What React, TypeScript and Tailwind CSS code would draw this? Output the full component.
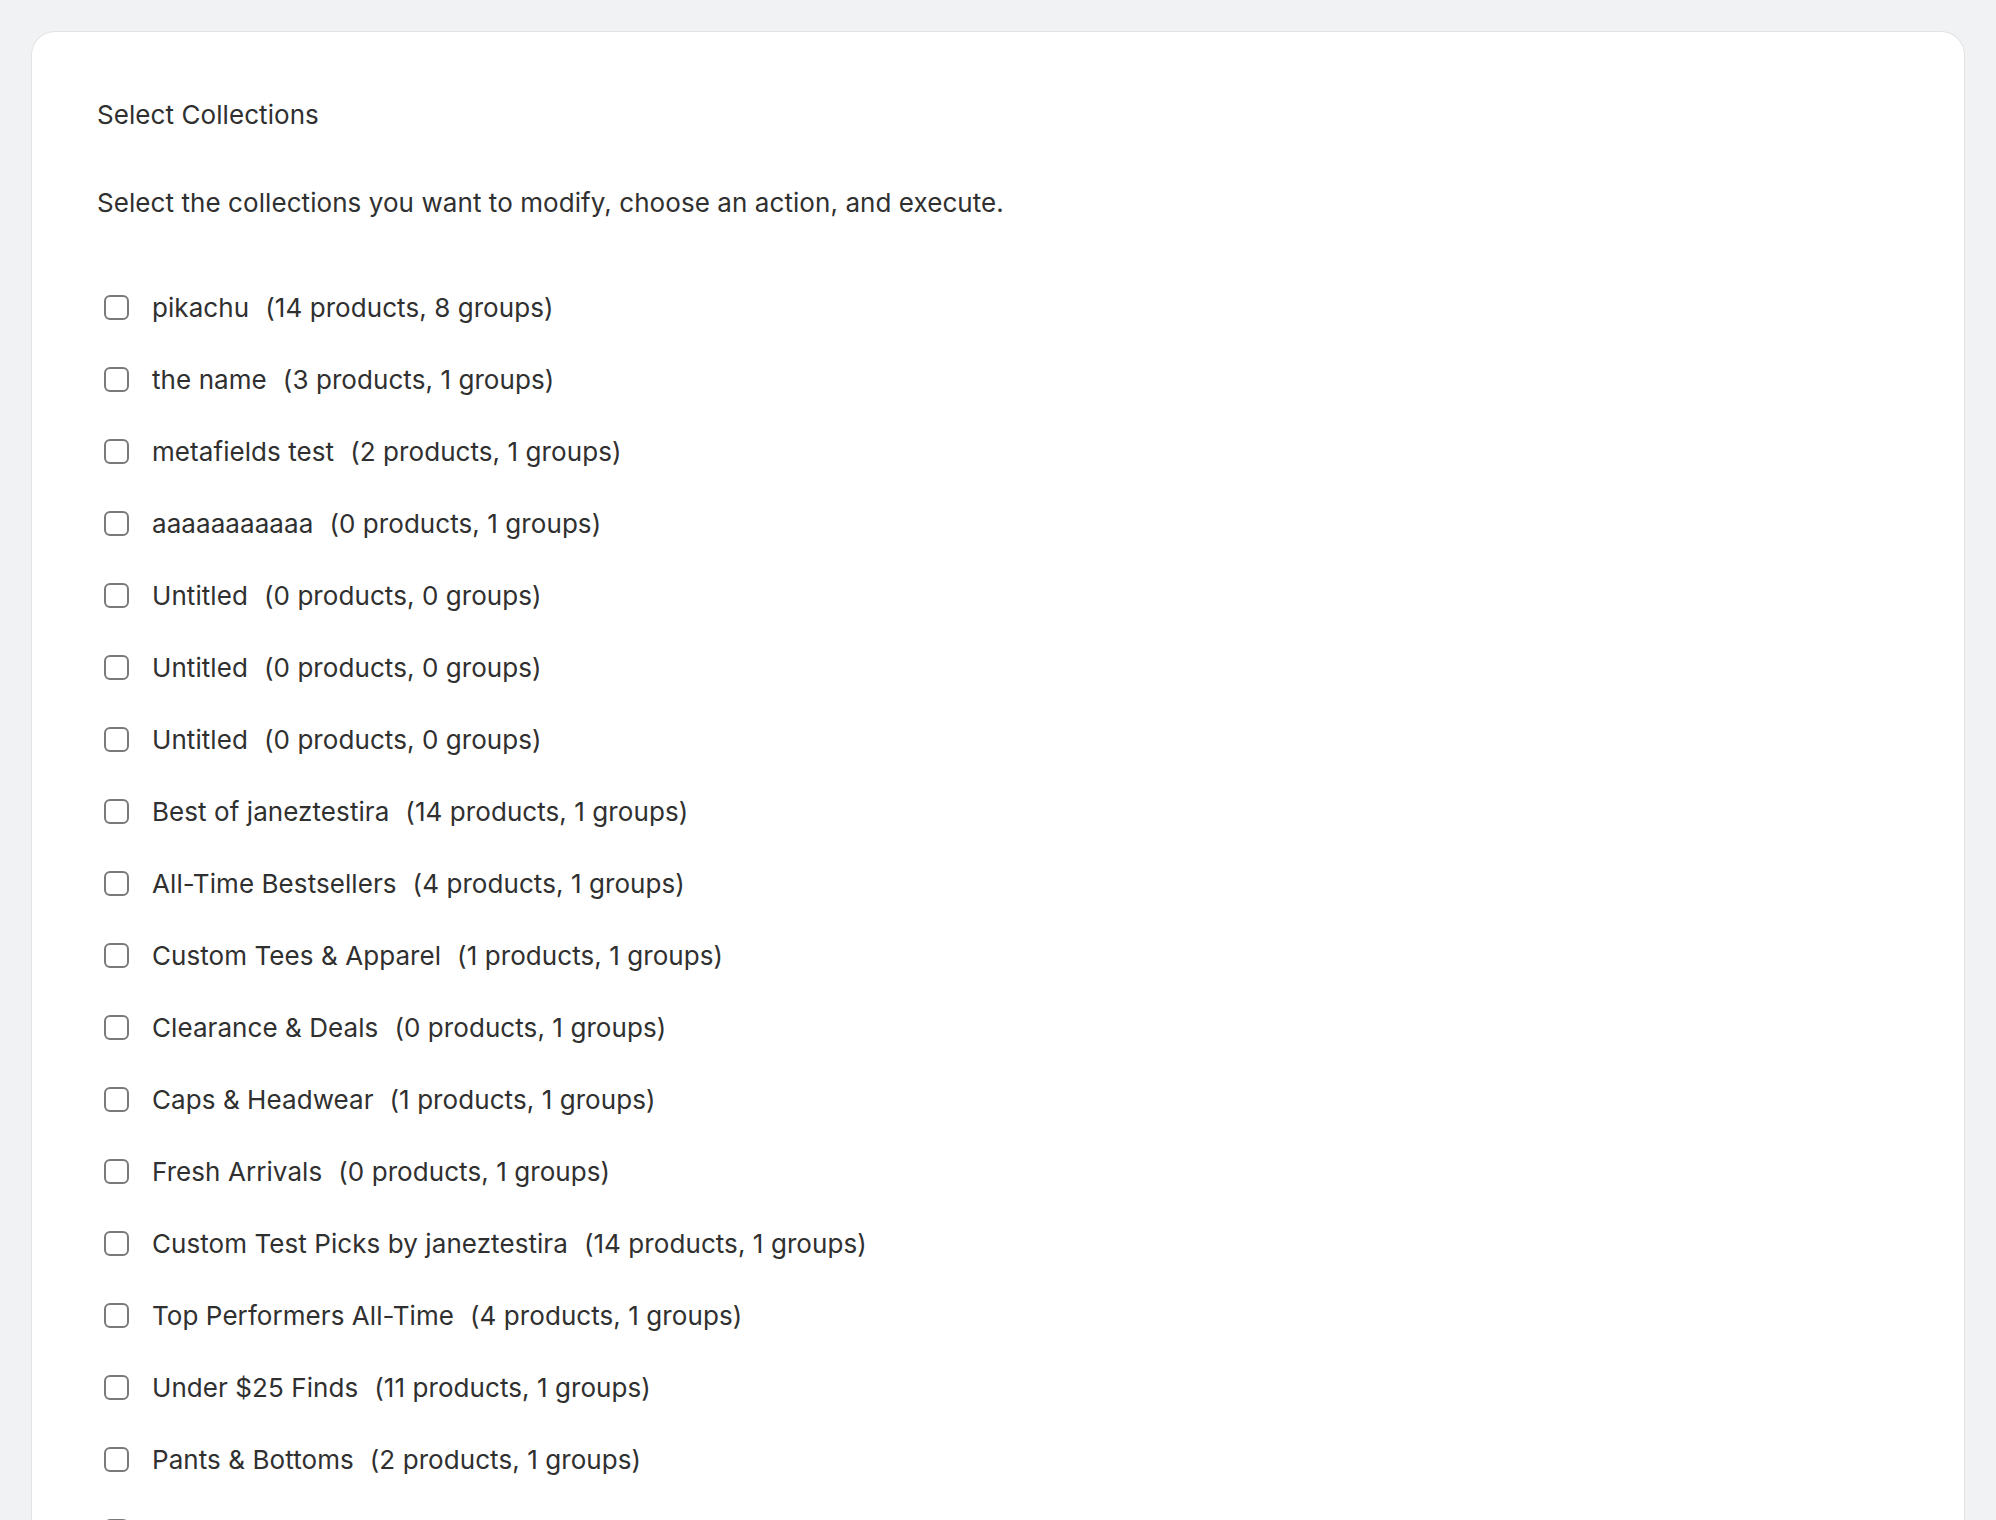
import React from "react";

type Collection = { name: string; products: number; groups: number };

const collections: Collection[] = [
  { name: "pikachu", products: 14, groups: 8 },
  { name: "the name", products: 3, groups: 1 },
  { name: "metafields test", products: 2, groups: 1 },
  { name: "aaaaaaaaaaa", products: 0, groups: 1 },
  { name: "Untitled", products: 0, groups: 0 },
  { name: "Untitled", products: 0, groups: 0 },
  { name: "Untitled", products: 0, groups: 0 },
  { name: "Best of janeztestira", products: 14, groups: 1 },
  { name: "All-Time Bestsellers", products: 4, groups: 1 },
  { name: "Custom Tees & Apparel", products: 1, groups: 1 },
  { name: "Clearance & Deals", products: 0, groups: 1 },
  { name: "Caps & Headwear", products: 1, groups: 1 },
  { name: "Fresh Arrivals", products: 0, groups: 1 },
  { name: "Custom Test Picks by janeztestira", products: 14, groups: 1 },
  { name: "Top Performers All-Time", products: 4, groups: 1 },
  { name: "Under $25 Finds", products: 11, groups: 1 },
  { name: "Pants & Bottoms", products: 2, groups: 1 },
  { name: "Summer Essentials", products: 3, groups: 1 },
];

function CollectionRow({ item }: { item: Collection }) {
  return (
    <label className="flex h-[72px] cursor-pointer items-center">
      <span className="ml-[7px] h-[25px] w-[25px] shrink-0 rounded-[6px] border-2 border-[#7a7a7a] bg-white" />
      <span className="ml-[23px] whitespace-nowrap">
        {item.name}
        <span className="ml-[16px]">
          ({item.products} products, {item.groups} groups)
        </span>
      </span>
    </label>
  );
}

export default function App() {
  return (
    <div
      className="min-h-screen bg-[#f1f2f4] px-[31px] pt-[31px] text-[26px] font-normal leading-[39px] tracking-[0.07px] text-[#303030]"
      style={{ fontFamily: "Inter, 'Noto Sans', sans-serif" }}
    >
      <div className="rounded-t-[24px] border border-b-0 border-[#e3e3e3] bg-white px-[65px] pt-[63px]">
        <h2 className="font-normal">Select Collections</h2>
        <p className="mt-[49px]">
          Select the collections you want to modify, choose an action, and execute.
        </p>
        <div className="mt-[49px] flex flex-col">
          {collections.map((c, i) => (
            <CollectionRow key={i} item={c} />
          ))}
        </div>
      </div>
    </div>
  );
}
